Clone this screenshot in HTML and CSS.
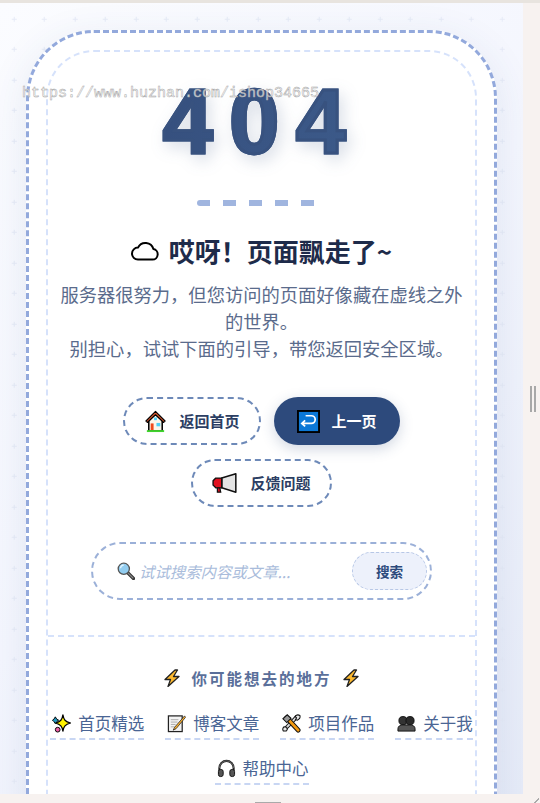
FILE: index.html
```html
<!DOCTYPE html>
<html lang="zh-CN">
<head>
<meta charset="utf-8">
<title>404</title>
<link rel="stylesheet" href="styles.css">
</head>
<body>
<div class="shell">
  <div class="topstrip"></div>
  <div class="middle">
    <main class="panel">
      <div class="card">
        <div class="inner">
          <div class="code">404</div>
          <div class="dashes"></div>
          <h1 class="title">
            <svg class="cloud" viewBox="0 0 28 20"><path d="M7 18.600h14.500a5.300 5.300 0 0 0 .9-10.500A8.300 8.300 0 0 0 7 6.600 6 6 0 0 0 7 18.600z" fill="#fff" stroke="#000" stroke-width="2" stroke-linejoin="round"/></svg>
            <span>哎呀！页面飘走了~</span>
          </h1>
          <p class="desc">服务器很努力，但您访问的页面好像藏在虚线之外的世界。<br>别担心，试试下面的引导，带您返回安全区域。</p>
          <div class="actions">
            <a class="btn">
              <svg class="btn-icon" viewBox="0 0 22 24"><path d="M4 11v11h14V11L11 4z" fill="#fdf6ea" stroke="#000" stroke-width="1.600"/><path d="M11 1.500 1 11.500l1.500 1.500L11 5l8.500 8 1.500-1.500z" fill="#e0592f" stroke="#000" stroke-width="1.200" stroke-linejoin="round"/><rect x="6" y="14" width="3" height="7" fill="#ee4a1c"/><rect x="12" y="13.500" width="4" height="3.500" fill="#4fd0f7"/><rect x="9.500" y="7.800" width="3" height="2.800" fill="#4fd0f7"/><rect x="2" y="21" width="18" height="2" fill="#3fd32c"/></svg>
              <span>返回首页</span>
            </a>
            <a class="btn btn-primary">
              <svg class="btn-icon" viewBox="0 0 24 24"><rect x="1" y="1" width="22" height="22" fill="#0b78d6" stroke="#000" stroke-width="2"/><path d="M9 6h6a4 4 0 0 1 4 4v0a4 4 0 0 1-4 4H5.500M8.500 10.800 5 14l3.500 3.200" fill="none" stroke="#fff" stroke-width="1.800"/></svg>
              <span>上一页</span>
            </a>
            <a class="btn btn-wide">
              <svg class="btn-icon" viewBox="0 0 24 20"><path d="M9 5 22 1v17L9 14z" fill="#e4e4e4" stroke="#111" stroke-width="1.400" stroke-linejoin="round"/><path d="M9 5H3.500L1 7.500v4l2.500 2.500H9z" fill="#e0101e" stroke="#111" stroke-width="1.300" stroke-linejoin="round"/><path d="M5 14v4h3l-.8-4z" fill="#e0101e" stroke="#111" stroke-width="1.200"/></svg>
              <span>反馈问题</span>
            </a>
          </div>
          <form class="search">
            <svg class="search-icon" viewBox="0 0 18 18"><path d="m11 11 5.500 5.500" stroke="#333" stroke-width="3.200" stroke-linecap="round"/><path d="m11.500 11.500 4.500 4.500" stroke="#888" stroke-width="1.100" stroke-linecap="round"/><circle cx="6.800" cy="6.800" r="5.600" fill="#92cdf0" stroke="#555" stroke-width="1.300"/><path d="M3.500 6.300a3.400 3.400 0 0 1 3.200-3.200" fill="none" stroke="#e4f5fe" stroke-width="1.300"/></svg>
            <span class="placeholder">试试搜索内容或文章...</span>
            <button class="search-btn" type="button">搜索</button>
          </form>
          <section class="more">
            <h2 class="more-title">
              <svg class="bolt" viewBox="0 0 18 18"><path d="M12 1 2 10.500h5.500L5 17.500l11-10h-5.500L14.500 1z" fill="#fdb92e" stroke="#222" stroke-width="1.300" stroke-linejoin="round"/></svg>
              <span>你可能想去的地方</span>
              <svg class="bolt" viewBox="0 0 18 18"><path d="M12 1 2 10.500h5.500L5 17.500l11-10h-5.500L14.500 1z" fill="#fdb92e" stroke="#222" stroke-width="1.300" stroke-linejoin="round"/></svg>
            </h2>
            <nav class="links">
              <a class="link">
                <svg class="link-icon" viewBox="0 0 20 20"><path d="M11.500 1c.8 5 2.300 7 8 8.500-5.700 1.500-7.200 3.500-8 8.500-.8-5-2.300-7-8-8.500 5.700-1.500 7.200-3.500 8-8.500z" fill="#fff200" stroke="#000" stroke-width="1.300" stroke-linejoin="round"/><path d="M3.500 3 5 5.500 7 6.500 5 8 3.500 10 2 8 .5 6.500 2 5.500z" fill="#1f9bc4" stroke="#000" stroke-width="1"/><circle cx="6" cy="16.500" r="2.500" fill="#ee5fa7" stroke="#000" stroke-width="1"/></svg>
                <span>首页精选</span>
              </a>
              <a class="link">
                <svg class="link-icon" viewBox="0 0 20 20"><rect x="1.500" y="2" width="14.500" height="16.500" fill="#f4f4f4" stroke="#222" stroke-width="1.300"/><path d="M4 6h8M4 8.500h7M4 11h5M4 13.500h4" stroke="#aaa" stroke-width="1"/><path d="M18.500 2 8 14l-1.500 3 3-1.500L19.500 3.500z" fill="#fbb02d" stroke="#222" stroke-width=".8"/></svg>
                <span>博客文章</span>
              </a>
              <a class="link">
                <svg class="link-icon" viewBox="0 0 20 20"><path d="M16 2.500 3.500 15.500" stroke="#111" stroke-width="4"/><path d="M16 2.500 3.500 15.500" stroke="#ddd" stroke-width="2"/><path d="M18.800 1.500a4 4 0 0 0-5 1l1.500 1.500-1 2 2 .5 2-1.500a4 4 0 0 0 .5-3.500zM1.500 18a3.500 3.500 0 0 1 .5-4.500l3 .5.500 2.500-1 1.500z" fill="#e8e8e8" stroke="#111" stroke-width="1.100"/><path d="M5 4 17 17" stroke="#111" stroke-width="5" stroke-linecap="round"/><path d="M5 4 17 17" stroke="#f39a12" stroke-width="3" stroke-linecap="round"/><path d="M1 5 5.500 .8 9.500 4.500 5 9z" fill="#999" stroke="#111" stroke-width="1.100"/></svg>
                <span>项目作品</span>
              </a>
              <a class="link">
                <svg class="link-icon" viewBox="0 0 20 20"><circle cx="6.300" cy="7" r="4.300" fill="#333" stroke="#111"/><circle cx="13.700" cy="7" r="4.300" fill="#2a2a2a" stroke="#111"/><path d="M1 18v-2.500c0-2.500 2-4 5.500-4H13.500c3.500 0 5.500 1.500 5.500 4V18z" fill="#555" stroke="#111"/></svg>
                <span>关于我</span>
              </a>
              <a class="link">
                <svg class="link-icon" viewBox="0 0 20 20"><path d="M2.500 12V9.500a7.500 7.500 0 0 1 15 0V12" fill="none" stroke="#222" stroke-width="2.200"/><path d="M2.500 9.500a7.500 7.500 0 0 1 15 0" fill="none" stroke="#777" stroke-width=".8"/><rect x="1.500" y="11" width="5" height="7.500" rx="2.200" fill="#555" stroke="#111"/><rect x="13.500" y="11" width="5" height="7.500" rx="2.200" fill="#555" stroke="#111"/></svg>
                <span>帮助中心</span>
              </a>
            </nav>
          </section>
        </div>
      </div>
    </main>
    <div class="side"><i class="grip"></i><i class="grip"></i></div>
  </div>
  <div class="bottomstrip"><i class="tab"></i><i class="corner"></i></div>
  <div class="watermark">https://www.huzhan.com/ishop34665</div>
</div>
</body>
</html>
```
FILE: styles.css
```css
* { box-sizing: border-box; }
html, body { margin: 0; padding: 0; }
body { font-family: "Liberation Sans", "Noto Sans CJK SC", sans-serif; background: #f7f2f0; }
.shell { position: relative; width: 540px; height: 803px; display: flex; flex-direction: column; overflow: hidden; }
.topstrip { height: 3px; background: #e8e4df; flex: none; }
.middle { flex: 1; display: flex; min-height: 0; }
.panel {
  width: 523px; flex: none; overflow: hidden; padding: 27px 26px 0;
  background-color: #f3f5fd;
  background-image:
    url("data:image/svg+xml,%3Csvg xmlns='http://www.w3.org/2000/svg' width='30.5' height='30.5'%3E%3Cpath d='M14 13.500v5M11.500 16h5' stroke='%23e7ebf7' stroke-width='1'/%3E%3C/svg%3E"),
    linear-gradient(135deg, #fbfcff 0%, #f4f6fe 50%, #e6ebf8 100%);
}
.card {
  width: 471px; height: 900px; padding: 17px; background: #fff;
  border: 3px dashed #93a9dc; border-radius: 68px;
  box-shadow: 0 10px 40px rgba(45, 74, 124, .10);
}
.inner { height: 100%; border: 2px dashed #d6e2fb; border-radius: 48px; padding: 0; text-align: center; }
.code {
  margin: 15px 0 0 2px; font-size: 90px; line-height: 110px; font-weight: 700; letter-spacing: 16.500px;
  background: linear-gradient(100deg, #324a78, #406090);
  -webkit-background-clip: text; background-clip: text; color: transparent;
  -webkit-text-stroke: 3px #38527f;
  filter: drop-shadow(4px 6px 8px rgba(45, 74, 124, .18));
}
.dashes {
  width: 118px; height: 6px; margin: 23px 0 0 149px; border-radius: 3px 0 0 3px;
  background: repeating-linear-gradient(90deg, #a0b5df 0 13px, transparent 13px 26px);
}
.title {
  margin: 27px 0 0; display: flex; justify-content: center; align-items: center; gap: 10px;
  font: 700 26px/36px "Noto Sans CJK SC", sans-serif; color: #1e2b4a;
}
.cloud { width: 28px; height: 20px; flex: none; }
.desc { margin: 12px 12px 0; font: 400 18.300px/27px "Noto Sans CJK SC", sans-serif; color: #5a6b8c; }
.actions { margin: 35px 40px 0; display: flex; flex-wrap: wrap; justify-content: center; gap: 14px 13px; }
.btn {
  height: 48px; padding: 0 19px; display: inline-flex; align-items: center; gap: 12px;
  border: 2px dashed #6d89b8; border-radius: 24px; background: #fff;
  font: 700 15px/20px "Noto Sans CJK SC", sans-serif; color: #2c3e63;
}
.btn-primary { border: 0; padding: 0 23px; background: #2d4a7c; color: #fff; box-shadow: 0 4px 14px rgba(45, 74, 124, .22); }
.btn-icon { width: 23px; height: 23px; flex: none; }
.btn-wide .btn-icon { width: 26px; }
.search {
  width: 341px; height: 58px; margin: 35px auto 0; padding: 0 3px 0 24px; display: flex; align-items: center;
  border: 2px dashed #9bb0d8; border-radius: 29px; background: #fff;
}
.search-icon { width: 18px; height: 18px; flex: none; }
.placeholder { margin-left: 4px; flex: 1; text-align: left; font: italic 400 15.400px/24px "Noto Sans CJK SC", sans-serif; color: #a9bcdb; }
.search-btn {
  width: 75px; height: 38px; padding: 0; border: 1px dashed #b7c7e6; border-radius: 19px; background: #edf1fb;
  font: 700 13.600px/20px "Noto Sans CJK SC", sans-serif; color: #2c4a7c;
}
.more { margin-top: 35px; border-top: 2px dashed #d6e2fb; padding-top: 29px; }
.more-title {
  margin: 0; display: flex; justify-content: center; align-items: center; gap: 10px;
  font: 700 15.500px/24px "Noto Sans CJK SC", sans-serif; letter-spacing: 2px; color: #5a6f9a;
}
.bolt { width: 18px; height: 18px; flex: none; }
.links { margin-top: 23px; display: flex; flex-wrap: wrap; justify-content: center; gap: 18px 21px; }
.link {
  display: inline-flex; align-items: center; gap: 7px; padding: 0 0 5px 2px; height: 27px;
  border-bottom: 2px dashed #c8d6f3;
  font: 400 16.500px/20px "Noto Sans CJK SC", sans-serif; color: #4a6594;
}
.link-icon { width: 19px; height: 19px; flex: none; }
.side { flex: 1; display: flex; justify-content: flex-end; align-items: flex-start; gap: 2px; padding: 383px 4px 0 0; }
.grip { width: 2px; height: 26px; background: #a8a8a8; }
.bottomstrip { height: 9px; flex: none; position: relative; display: flex; justify-content: center; background: #f7f2f0; }
.tab { width: 26px; height: 1px; margin: 8px 4px 0 0; background: #aaa; }
.corner { position: absolute; right: 1px; bottom: 0; width: 5px; height: 5px; background: linear-gradient(135deg, transparent 45%, #aaa 45% 60%, transparent 60%); }
.watermark {
  position: absolute; left: 22px; top: 85px; font: 400 15px/18px "Liberation Mono", monospace; white-space: nowrap;
  color: rgba(255,255,255,.75); -webkit-text-stroke: .5px #a5a5a5;
}
```
